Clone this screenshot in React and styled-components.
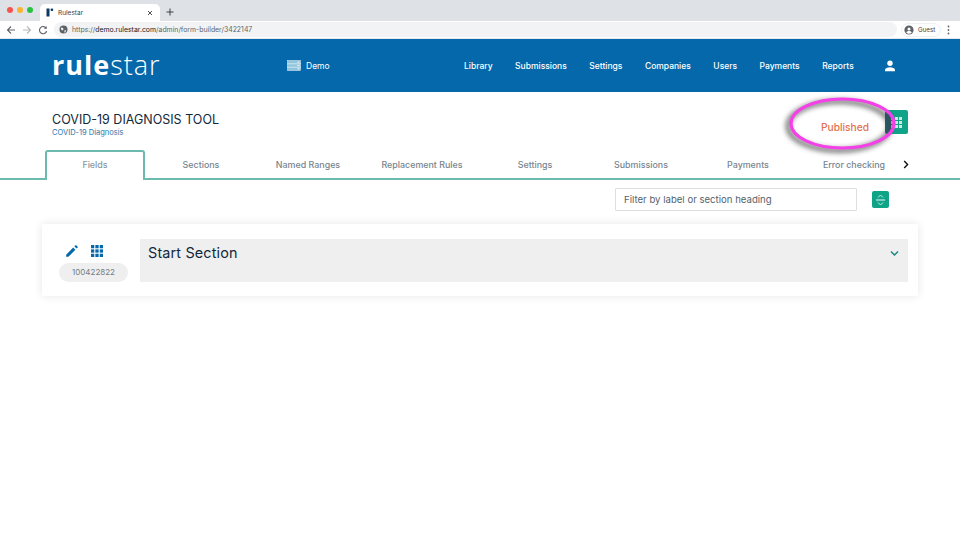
import React from "react";
import styled, { createGlobalStyle } from "styled-components";

const Global = createGlobalStyle`
  html, body { margin: 0; padding: 0; background: #fff; }
  body { width: 960px; height: 540px; overflow: hidden; font-family: "Inter", "Liberation Sans", sans-serif; }
  * { box-sizing: border-box; }
`;

const Page = styled.div`
  position: relative;
  width: 960px;
  height: 540px;
  background: #fff;
  overflow: hidden;
`;

const TabStrip = styled.div`
  height: 21px;
  background: #dee1e6;
  display: flex;
  align-items: flex-end;
  padding-left: 7px;
`;
const Lights = styled.div`
  display: flex;
  gap: 4px;
  align-self: center;
  margin-right: 7px;
  margin-top: -1px;
`;
const Light = styled.span`
  width: 6px;
  height: 6px;
  border-radius: 50%;
  background: ${p => p.$c};
`;
const BrowserTab = styled.div`
  width: 120px;
  height: 17px;
  background: #fff;
  border-radius: 5px 5px 0 0;
  display: flex;
  align-items: center;
  padding: 0 7px 0 6px;
  font-size: 6.5px;
  color: #3c4043;
`;
const TabTitle = styled.span`
  flex: 1;
  margin-left: 4px;
`;
const NewTab = styled.span`
  margin: 0 0 1px 6px;
  height: 16px;
  display: flex;
  align-items: center;
  color: #3c4043;
`;

const Toolbar = styled.div`
  height: 18px;
  background: #fff;
  display: flex;
  align-items: center;
  padding: 0 8px 0 6px;
  border-bottom: 1px solid #e3e6ea;
`;
const NavIcons = styled.div`
  display: flex;
  gap: 6px;
  align-items: center;
  margin-right: 6px;
`;
const Omnibox = styled.div`
  width: 843px;
  flex-shrink: 0;
  height: 15px;
  border-radius: 8px;
  background: #f1f3f4;
  display: flex;
  align-items: center;
  padding-left: 5px;
  gap: 4px;
  font-size: 6.9px;
  color: #5f6368;
`;
const UrlHost = styled.span`
  color: #202124;
`;
const GuestChip = styled.div`
  margin-left: 4px;
  flex-shrink: 0;
  display: flex;
  align-items: center;
  gap: 4px;
  font-size: 6.2px;
  color: #3c4043;
  height: 14px;
  padding: 0 4px 0 2px;
  width: 40px;
  border: 1px solid #eef0f2;
  border-radius: 7px;
`;
const Kebab = styled.span`
  margin-left: 6px;
  display: flex;
  align-items: center;
`;

const Header = styled.header`
  height: 53px;
  background: #0568ab;
  display: flex;
  align-items: center;
  padding: 0 0 0 52px;
  color: #fff;
`;
const Logo = styled.div`
  width: 235px;
  font-family: "Open Sans", sans-serif;
  font-size: 27px;
  line-height: 30px;
  letter-spacing: 1px;
  margin-top: -2px;
  font-weight: 300;
`;
const LogoBold = styled.span`
  font-weight: 700;
`;
const DemoLink = styled.div`
  display: flex;
  align-items: center;
  gap: 5px;
  font-size: 8.5px;
  width: 177px;
`;
const Nav = styled.nav`
  display: flex;
  align-items: center;
  gap: 22.5px;
  font-size: 8.5px;
  font-weight: 500;
`;
const UserSlot = styled.span`
  display: flex;
  margin-left: 8px;
`;

const TitleRow = styled.div`
  height: 58px;
  display: flex;
  align-items: flex-start;
  justify-content: space-between;
  padding: 21px 52px 0 52px;
`;
const Title = styled.h1`
  margin: 0;
  font-size: 12.5px;
  line-height: 14px;
  font-weight: 400;
  color: #10293c;
`;
const Subtitle = styled.div`
  font-size: 7.5px;
  line-height: 9px;
  padding-top: 1px;
  color: #2a78ae;
`;
const StatusGroup = styled.div`
  display: flex;
  align-items: flex-start;
  margin-top: -3px;
`;
const Status = styled.span`
  font-size: 10.2px;
  line-height: 12px;
  font-weight: 500;
  color: #e5704f;
  margin: 11px 16px 0 0;
`;
const GridButton = styled.div`
  width: 23px;
  height: 24px;
  background: radial-gradient(ellipse 52px 25px at -42px 14px, #1c6176 99%, #0fa388 100%);
  border-radius: 2px;
  display: flex;
  align-items: center;
  justify-content: center;
`;

const Tabs = styled.div`
  height: 30px;
  display: flex;
  align-items: stretch;
  padding-left: 45px;
  position: relative;
  border-bottom: 2px solid #6cb9ad;
`;
const Tab = styled.div`
  width: ${p => p.$w}px;
  display: flex;
  align-items: center;
  justify-content: center;
  font-size: 8.9px;
  font-weight: 500;
  color: #76858f;
  ${p => p.$active && `
    border: 2px solid #6cb9ad;
    border-bottom: none;
    border-radius: 3px 3px 0 0;
    background: #fff;
    height: 30px;
    padding-bottom: 4px;
    color: #8a979f;
  `}
`;
const TabNext = styled.span`
  display: flex;
  align-items: center;
  margin-left: -6px;
`;

const FilterRow = styled.div`
  display: flex;
  justify-content: flex-end;
  align-items: center;
  padding: 8px 71px 0 0;
  gap: 15px;
`;
const FilterInput = styled.div`
  width: 242px;
  height: 23px;
  border: 1px solid #dcdfe0;
  border-radius: 1px;
  display: flex;
  align-items: center;
  padding-left: 8px;
  font-size: 9.6px;
  color: #55626c;
`;
const SortButton = styled.div`
  width: 17px;
  height: 17px;
  background: #0fa388;
  border-radius: 2px;
  display: flex;
  align-items: center;
  justify-content: center;
`;

const Card = styled.section`
  margin: 13px 42px 0 42px;
  height: 72px;
  background: #fff;
  box-shadow: 0 0 9px rgba(0, 0, 0, 0.1);
  display: flex;
  padding: 15px 10px 14px 17px;
`;
const CardMeta = styled.div`
  width: 81px;
  display: flex;
  flex-direction: column;
  align-items: flex-start;
  gap: 2px;
  margin-top: 2px;
`;
const MetaIcons = styled.div`
  display: flex;
  align-items: center;
  gap: 12px;
  height: 20px;
  margin-left: 6px;
`;
const IdPill = styled.div`
  width: 69px;
  height: 20px;
  border-radius: 10px;
  background: #efefef;
  display: flex;
  align-items: center;
  justify-content: center;
  font-size: 8px;
  color: #6f7d87;
`;
const SectionBar = styled.div`
  flex: 1;
  background: #efefef;
  display: flex;
  justify-content: space-between;
  padding: 5px 9px 0 8px;
`;
const SectionTitle = styled.h2`
  margin: 0;
  font-size: 14.4px;
  line-height: 18px;
  font-weight: 400;
  color: #10293c;
  letter-spacing: 0.15px;
`;
const Chevron = styled.span`
  display: flex;
  height: 7px;
  margin-top: 6px;
`;

const Annotation = styled.svg`
  position: absolute;
  left: 775px;
  top: 88px;
  width: 135px;
  height: 72px;
  pointer-events: none;
`;

const Back = () => (
  <svg width="10" height="10" viewBox="0 0 10 10" fill="none" stroke="#5f6368" strokeWidth="1.1"><path d="M9 5H1.5M5 1.5 1.5 5 5 8.5" /></svg>
);
const Forward = () => (
  <svg width="10" height="10" viewBox="0 0 10 10" fill="none" stroke="#b5b9bd" strokeWidth="1.1"><path d="M1 5h7.5M5 1.5 8.5 5 5 8.5" /></svg>
);
const Reload = () => (
  <svg width="10" height="10" viewBox="0 0 10 10" fill="none" stroke="#5f6368" strokeWidth="1.1"><path d="M8.3 3.5A3.6 3.6 0 1 0 8.6 6" /><path d="M8.6 1v2.8H5.9" fill="#5f6368" stroke="none" /></svg>
);
const Globe = () => (
  <svg width="9" height="9" viewBox="0 0 9 9"><circle cx="4.5" cy="4.5" r="4" fill="#5f6368" /><path d="M2 2.5 4 3 4.5 4.5 3 5.5 2 4ZM5.5 5.5 7 5 6.5 7.2 5.3 7.4Z" fill="#f1f3f4" /></svg>
);
const Favicon = () => (
  <svg width="8" height="9" viewBox="0 0 8 9"><rect x="0.5" y="0.5" width="3" height="8" fill="#0d3a63" /><rect x="4.6" y="0.5" width="2.6" height="2.6" rx="1" fill="#0d3a63" /></svg>
);
const Avatar = () => (
  <svg width="10" height="10" viewBox="0 0 10 10"><circle cx="5" cy="5" r="4.6" fill="#5f6368" /><circle cx="5" cy="3.9" r="1.5" fill="#fff" /><path d="M2.2 7.5c.7-1.2 1.8-1.6 2.8-1.6s2.1.4 2.8 1.6C7 8.3 6 8.7 5 8.7s-2-.4-2.8-1.2Z" fill="#fff" /></svg>
);
const Dots = () => (
  <svg width="3" height="10" viewBox="0 0 3 10" fill="#5f6368"><circle cx="1.5" cy="1.5" r="0.9" /><circle cx="1.5" cy="5" r="0.9" /><circle cx="1.5" cy="8.5" r="0.9" /></svg>
);
const ServerIcon = () => (
  <svg width="14" height="11" viewBox="0 0 14 11">
    <rect x="0.5" y="0.5" width="13" height="10" fill="#8fc4dc" stroke="#cfe6f0" strokeWidth="0.6" />
    <path d="M0 3.8h14M0 7.2h14" stroke="#e8f3f8" strokeWidth="0.7" />
    <path d="M10.5 2.2h2M10.5 5.5h2M10.5 8.9h2" stroke="#fff" strokeWidth="0.9" />
  </svg>
);
const UserIcon = () => (
  <svg width="12" height="12" viewBox="0 0 12 12" fill="#fff"><circle cx="6" cy="3.2" r="2.7" /><path d="M1 11.3V9.8c0-1.6 2.6-2.6 5-2.6s5 1 5 2.6v1.5Z" /></svg>
);
const Grid = ({ color, size = 11, gap = 4 }) => {
  const cells = [];
  for (let r = 0; r < 3; r++) for (let c = 0; c < 3; c++) cells.push(<rect key={r * 3 + c} x={c * gap} y={r * gap} width={gap - 1} height={gap - 1} />);
  return <svg width={size} height={size} viewBox={`0 0 ${gap * 3 - 1} ${gap * 3 - 1}`} fill={color}>{cells}</svg>;
};
const Pencil = () => (
  <svg width="14" height="14" viewBox="0 0 24 24" fill="#0568ab"><path d="M2 18.25V22h3.75L17.81 9.94l-3.75-3.75L2 18.25zM21.71 6.04a1 1 0 0 0 0-1.41l-2.34-2.34a1 1 0 0 0-1.41 0l-1.83 1.83 3.75 3.75 1.83-1.83z" /></svg>
);
const SortIcon = () => (
  <svg width="11" height="12" viewBox="0 0 11 12" fill="none" stroke="#c8ece4" strokeWidth="1"><path d="M3 3.5 5.5 1 8 3.5M3 8.5 5.5 11 8 8.5" /><path d="M1 6h9" strokeWidth="1.2" /></svg>
);
const ChevronDown = () => (
  <svg width="9" height="7" viewBox="0 0 9 7" fill="none" stroke="#12857a" strokeWidth="1.4"><path d="M1 1.5 4.5 5 8 1.5" /></svg>
);
const ChevronRight = () => (
  <svg width="6" height="9" viewBox="0 0 6 9" fill="none" stroke="#111" strokeWidth="1.4"><path d="M1.2 1 4.6 4.5 1.2 8" /></svg>
);

const navItems = ["Library", "Submissions", "Settings", "Companies", "Users", "Payments", "Reports"];
const tabs = [
  ["Sections", 112], ["Named Ranges", 102], ["Replacement Rules", 126], ["Settings", 100],
  ["Submissions", 112], ["Payments", 102], ["Error checking", 110],
];

export default function App() {
  return (
    <Page>
      <Global />
      <TabStrip>
        <Lights>
          <Light $c="#f5544d" /><Light $c="#fbb32f" /><Light $c="#29c240" />
        </Lights>
        <BrowserTab>
          <Favicon />
          <TabTitle>Rulestar</TabTitle>
          <svg width="6" height="6" viewBox="0 0 6 6" stroke="#3c4043" strokeWidth="0.9"><path d="M1 1l4 4M5 1 1 5" /></svg>
        </BrowserTab>
        <NewTab>
          <svg width="8" height="8" viewBox="0 0 8 8" stroke="#3c4043" strokeWidth="1"><path d="M4 .5v7M.5 4h7" /></svg>
        </NewTab>
      </TabStrip>
      <Toolbar>
        <NavIcons><Back /><Forward /><Reload /></NavIcons>
        <Omnibox>
          <Globe />
          <span>https://<UrlHost>demo.rulestar.com</UrlHost>/admin/form-builder/3422147</span>
        </Omnibox>
        <GuestChip><Avatar />Guest</GuestChip>
        <Kebab><Dots /></Kebab>
      </Toolbar>

      <Header>
        <Logo><LogoBold>rule</LogoBold>star</Logo>
        <DemoLink><ServerIcon />Demo</DemoLink>
        <Nav>
          {navItems.map(n => <span key={n}>{n}</span>)}
          <UserSlot><UserIcon /></UserSlot>
        </Nav>
      </Header>

      <TitleRow>
        <div>
          <Title>COVID-19 DIAGNOSIS TOOL</Title>
          <Subtitle>COVID-19 Diagnosis</Subtitle>
        </div>
        <StatusGroup>
          <Status>Published</Status>
          <GridButton><Grid color="#cfe9e2" size={11} /></GridButton>
        </StatusGroup>
      </TitleRow>

      <Tabs>
        <Tab $active $w={100}>Fields</Tab>
        {tabs.map(([t, w]) => <Tab key={t} $w={w}>{t}</Tab>)}
        <TabNext><ChevronRight /></TabNext>
      </Tabs>

      <FilterRow>
        <FilterInput>Filter by label or section heading</FilterInput>
        <SortButton><SortIcon /></SortButton>
      </FilterRow>

      <Card>
        <CardMeta>
          <MetaIcons><Pencil /><Grid color="#0568ab" size={12} /></MetaIcons>
          <IdPill>100422822</IdPill>
        </CardMeta>
        <SectionBar>
          <SectionTitle>Start Section</SectionTitle>
          <Chevron><ChevronDown /></Chevron>
        </SectionBar>
      </Card>

      <Annotation viewBox="0 0 135 72">
        <defs>
          <filter id="sh" x="-20%" y="-30%" width="140%" height="160%">
            <feGaussianBlur stdDeviation="2.4" />
          </filter>
        </defs>
        <ellipse cx="64" cy="38" rx="51" ry="24.5" fill="none" stroke="#444" strokeWidth="5" opacity="0.7" filter="url(#sh)" />
        <ellipse cx="67.5" cy="35.5" rx="51.5" ry="24.5" fill="none" stroke="#f53fe8" strokeWidth="3.2" />
      </Annotation>
    </Page>
  );
}
